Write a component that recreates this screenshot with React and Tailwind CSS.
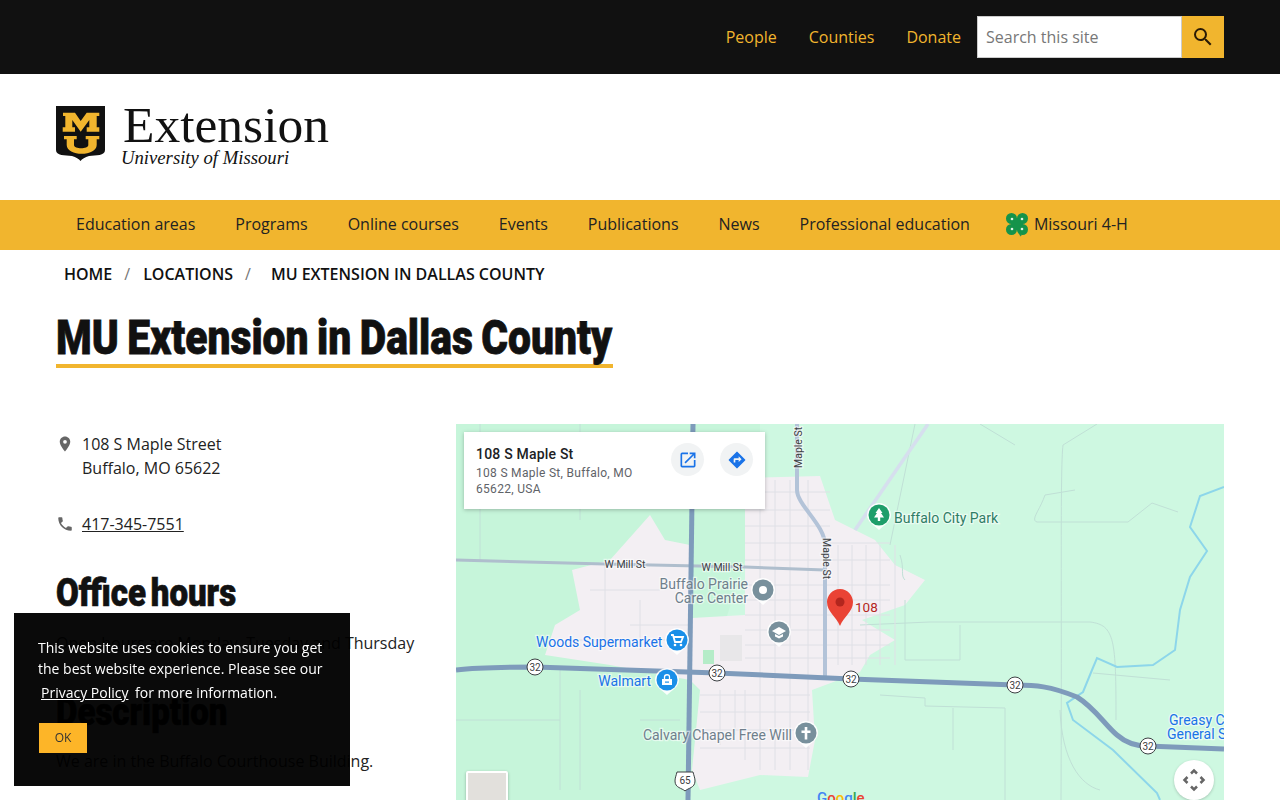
const NAV_ITEMS = ['Education areas', 'Programs', 'Online courses', 'Events', 'Publications', 'News', 'Professional education'];

const Shield = () => (
  <svg width="50" height="56" viewBox="0 0 50 56" className="shrink-0">
    <path d="M0 0H49V44C49 50 40 49 33 50C29 51 26 53 24.500 55C23 53 20 51 16 50C9 49 0 50 0 44Z" fill="#111" />
    <path d="M7 6.700H19L24.700 15L30.700 6.700H43.300V10H40.700V21.300H43.300V25.700H30.700V21.300H33.300V14L24.700 25.700L16.300 14V21.300H19V25.700H6.700V21.300H9.300V10H7Z" fill="#f1b52e" />
    <path d="M8 30H20.700V33.300H18V39C18 43.300 32.300 43.300 32.300 39V33.300H29.700V30H43.300V33.300H40.700V39C40.700 50.700 10.700 50.700 10.700 39V33.300H8Z" fill="#f1b52e" />
  </svg>
);

const Clover = () => (
  <svg width="24" height="25" viewBox="0 0 24 25" className="shrink-0">
    <path d="M12 14C13 18 14 21 16 24" stroke="#2f8f4e" strokeWidth="1.500" fill="none" />
    <g fill="#15934a">
      <circle cx="6.500" cy="6.500" r="5.500" />
      <circle cx="17.500" cy="6.500" r="5.500" />
      <circle cx="6.500" cy="17.500" r="5.500" />
      <circle cx="17.500" cy="17.500" r="5.500" />
      <rect x="6" y="6" width="12" height="12" />
    </g>
    <g fill="#dff3e4">
      <circle cx="7" cy="7" r="1.300" />
      <circle cx="17" cy="7" r="1.300" />
      <circle cx="7" cy="17" r="1.300" />
      <circle cx="17" cy="17" r="1.300" />
    </g>
  </svg>
);

const RouteBadge = ({ x, y }) => (
  <g>
    <circle cx={x} cy={y} r="8" fill="#fff" stroke="#3c4043" strokeWidth="1" />
    <text x={x} y={y + 3.500} textAnchor="middle" fontSize="10" fill="#3c4043">32</text>
  </g>
);

// white-ringed google style place marker, children are drawn around 0,0
const Poi = ({ x, y, fill, children }) => (
  <g transform={`translate(${x} ${y})`}>
    <path d="M-12 0A12 12 0 1 1 12 0C12 7 5 10 0 15C-5 10 -12 7 -12 0Z" fill="#fff" opacity=".9" />
    <circle r="10.500" fill={fill} />
    {children}
  </g>
);

const MapLabel = ({ x, y, fill, anchor = 'start', size = 14, children }) => (
  <text x={x} y={y} fill={fill} fontSize={size} textAnchor={anchor} stroke="#fff" strokeWidth="2.500" strokeOpacity=".55" paintOrder="stroke">
    {children}
  </text>
);

const TownStreets = () => {
  const horizontal = [492, 510, 526, 543, 560, 585, 600, 615, 630, 645, 658, 695, 712, 730, 748];
  const vertical = [760, 775, 790, 808, 838, 852, 866, 880, 895];
  return (
    <g stroke="#dfe0e6" strokeWidth="1" fill="none">
      {horizontal.map((y) => (
        <path key={y} d={`M${y > 680 ? 700 : 745} ${y}H${y > 680 ? 810 : y < 540 ? 830 : 890}`} />
      ))}
      {vertical.map((x) => (
        <path key={x} d={`M${x} ${x > 820 ? 545 : 480}V${x > 820 ? 665 : 770}`} />
      ))}
      <path d="M720 690V745M735 690V735M745 690V760" />
      <path d="M590 590H660M605 565V650M640 600V650M565 640H690M630 625H690" />
    </g>
  );
};

const MapArt = () => (
  <svg width="768" height="376" viewBox="456 424 768 376" className="absolute left-0 top-0" style={{ fontFamily: 'Roboto, sans-serif' }}>
    <rect x="456" y="424" width="768" height="376" fill="#cef8e1" />
    <path d="M456 424H760V480L745 560L700 700L690 800H456Z" fill="#c6f5da" />
    <path d="M745 478L820 476L835 520L875 540L895 565L925 580L905 605L862 620L895 640L870 655L860 672L812 690L815 740L808 777L760 775L700 790L692 770L700 690L690 680L610 665L545 655L555 625L580 610L572 570L610 560L650 515L665 540L690 545L692 618L745 615Z" fill="#f3eff3" />
    <path d="M703 650H714V664H703Z" fill="#b5ecc8" />
    <rect x="720" y="635" width="22" height="26" fill="#e8e7e9" />

    {/* faint country roads */}
    <g stroke="#c0e0d6" strokeWidth="1" fill="none">
      <path d="M915 424L890 545M980 424L1015 445M1063 445L1097 424M1063 445C1060 470 1062 600 1061 800" />
      <path d="M1075 490L1045 495C1040 510 1030 520 1037 522H1128L1152 503L1178 512" />
      <path d="M900 555C905 570 900 575 905 580M905 600V660H960V625M860 625L930 622H1090C1115 625 1116 640 1116 720" />
      <path d="M880 695L925 698V706L1005 708V800M953 708V750M1093 673L1170 680" />
      <path d="M580 424V520M480 424V560M560 670V790M580 690V790M456 720H560M640 720H680" />
      <path d="M1060 710C1062 760 1080 785 1100 790" />
    </g>
    <TownStreets />

    {/* water */}
    <path d="M1224 487L1200 496L1190 527L1207 551L1190 577L1180 610L1175 650L1153 665L1117 667L1097 658L1092 670L1083 692L1067 703L1073 720L1113 750L1157 793L1160 800" stroke="#8dd6ea" strokeWidth="2" fill="none" />

    {/* roads */}
    <path d="M928 424L855 530" stroke="#d6dfee" strokeWidth="3.500" fill="none" />
    <path d="M456 560L605 564L745 567L825 570" stroke="#afbecd" strokeWidth="3" fill="none" />
    <path d="M797 424V490C797 505 825 525 825 545V680" stroke="#b3c3d8" strokeWidth="4" fill="none" />
    <path d="M693 424L688 800" stroke="#7e9bbb" strokeWidth="5" fill="none" />
    <path d="M456 670C480 667 510 667 535 667L717 673L851 679L1015 685C1035 685 1050 686 1077 697C1095 708 1105 725 1117 735C1125 742 1135 746 1147 746L1224 749" stroke="#7e9bbb" strokeWidth="5" fill="none" />

    <MapLabel x="625" y="568" fill="#3c4043" anchor="middle" size="10.500">W Mill St</MapLabel>
    <MapLabel x="722" y="571" fill="#3c4043" anchor="middle" size="10.500">W Mill St</MapLabel>
    <g transform="translate(802 468) rotate(-90)">
      <MapLabel x="0" y="0" fill="#3c4043" size="10.500">Maple St</MapLabel>
    </g>
    <g transform="translate(823 538) rotate(90)">
      <MapLabel x="0" y="0" fill="#3c4043" size="10.500">Maple St</MapLabel>
    </g>

    <MapLabel x="748" y="589" fill="#6f7f8c" anchor="end">Buffalo Prairie</MapLabel>
    <MapLabel x="748" y="603" fill="#6f7f8c" anchor="end">Care Center</MapLabel>
    <Poi x="763" y="590" fill="#78909c"><circle r="4" fill="#fff" /></Poi>

    <Poi x="779" y="632" fill="#78909c">
      <path d="M-7 -1L0 -5L7 -1L0 3Z" fill="#fff" />
      <path d="M-4 2V4.500L0 6.500L4 4.500V2L0 4Z" fill="#fff" />
    </Poi>

    <MapLabel x="536" y="647" fill="#1a73e8">Woods Supermarket</MapLabel>
    <Poi x="677" y="640" fill="#1a8fe8">
      <path d="M-6 -5H-4L-2 2H4L6 -3H-3" stroke="#fff" strokeWidth="1.800" fill="none" />
      <circle cx="-2" cy="5" r="1.300" fill="#fff" />
      <circle cx="4" cy="5" r="1.300" fill="#fff" />
    </Poi>

    <MapLabel x="651" y="686" fill="#1a73e8" anchor="end">Walmart</MapLabel>
    <Poi x="667" y="680" fill="#1a8fe8">
      <path d="M-5 -1H5V5H-5Z" fill="#fff" />
      <path d="M-2.500 -1V-3C-2.500 -6 2.500 -6 2.500 -3V-1" stroke="#fff" strokeWidth="1.300" fill="none" />
      <rect x="-2" y="1.500" width="4" height="1.200" fill="#1a8fe8" />
    </Poi>

    <MapLabel x="792" y="740" fill="#6f7f8c" anchor="end">Calvary Chapel Free Will</MapLabel>
    <Poi x="806" y="733" fill="#78909c">
      <path d="M-1.300 -6H1.300V-2.500H4.500V0H1.300V6.500H-1.300V0H-4.500V-2.500H-1.300Z" fill="#fff" />
    </Poi>

    <Poi x="879" y="515" fill="#1e9e6a">
      <path d="M0 -7L3.500 -2H2L5 2.500H1.200V6H-1.200V2.500H-5L-2 -2H-3.500Z" fill="#fff" />
    </Poi>
    <MapLabel x="894" y="523" fill="#2f7d66">Buffalo City Park</MapLabel>

    <MapLabel x="1169" y="725" fill="#1a73e8">Greasy Creek</MapLabel>
    <MapLabel x="1167" y="739" fill="#1a73e8">General Store</MapLabel>

    <RouteBadge x={535} y={667} />
    <RouteBadge x={717} y={673} />
    <RouteBadge x={851} y={679} />
    <RouteBadge x={1015} y={685} />
    <RouteBadge x={1148} y={746} />

    <g>
      <path d="M677 772H693C694 776 695 778 695 781C695 788 688 788 685 791C682 788 675 788 675 781C675 778 676 776 677 772Z" fill="#fff" stroke="#3c4043" />
      <text x="685" y="784" textAnchor="middle" fontSize="10" fill="#3c4043">65</text>
    </g>

    {/* red pin */}
    <path d="M840 589C832 589 827 596 827 602C827 612 836 616 840 626C844 616 853 612 853 602C853 596 848 589 840 589Z" fill="#ea4335" />
    <circle cx="840" cy="602" r="4.500" fill="#b3261e" />
    <text x="855" y="612" fontSize="13.500" fill="#b3261e">108</text>

    <text x="817" y="803" fontSize="15" fontWeight="500">
      <tspan fill="#4285f4">G</tspan><tspan fill="#ea4335">o</tspan><tspan fill="#fbbc04">o</tspan><tspan fill="#4285f4">g</tspan><tspan fill="#34a853">l</tspan><tspan fill="#ea4335">e</tspan>
    </text>
  </svg>
);

const MapPanel = () => (
  <div className="relative h-[376px] overflow-hidden">
    <MapArt />
    <div className="absolute left-2 top-2 w-[301px] h-[77px] bg-white shadow-[0_1px_4px_rgba(0,0,0,0.25)] pl-3 pt-3 flex font-['Roboto',sans-serif]">
      <div className="w-[195px]">
        <div className="text-[14px] leading-[20px] font-medium tracking-[.2px] text-[#202124]">108 S Maple St</div>
        <div className="w-[175px] text-[12px] leading-[16px] tracking-[.3px] text-[#5f6368] mt-[1px]">108 S Maple St, Buffalo, MO 65622, USA</div>
      </div>
      <div className="flex gap-[16px] -mt-[1px]">
        <div className="w-[33px] h-[33px] rounded-full bg-[#f1f3f4] flex items-center justify-center">
          <svg width="20" height="20" viewBox="0 0 24 24" fill="#1a73e8">
            <path d="M19 19H5V5h7V3H5a2 2 0 0 0-2 2v14a2 2 0 0 0 2 2h14a2 2 0 0 0 2-2v-7h-2v7zM14 3v2h3.590l-9.830 9.830 1.410 1.410L19 6.410V10h2V3h-7z" />
          </svg>
        </div>
        <div className="w-[33px] h-[33px] rounded-full bg-[#f1f3f4] flex items-center justify-center">
          <svg width="20" height="20" viewBox="0 0 24 24" fill="#1a73e8">
            <path d="M21.710 11.290l-9-9a1 1 0 0 0-1.420 0l-9 9a1 1 0 0 0 0 1.420l9 9a1 1 0 0 0 1.420 0l9-9a1 1 0 0 0 0-1.420zM14 14.500V12h-4v3H8v-4a1 1 0 0 1 1-1h5V7.500l3.500 3.500-3.500 3.500z" />
          </svg>
        </div>
      </div>
    </div>
    <div className="absolute left-[10px] top-[347px] w-[42px] h-[42px] bg-[#e2e0dc] border-2 border-white rounded-[2px] shadow-[0_1px_3px_rgba(0,0,0,0.3)]" />
    <div className="absolute left-[718px] top-[336px] w-[40px] h-[40px] rounded-full bg-white shadow-[0_1px_3px_rgba(0,0,0,0.2)] flex items-center justify-center">
      <svg width="24" height="24" viewBox="0 0 24 24" fill="none" stroke="#666" strokeWidth="2.500">
        <path d="M9 5.500L12 2.500L15 5.500M9 18.500L12 21.500L15 18.500M5.500 9L2.500 12L5.500 15M18.500 9L21.500 12L18.500 15" />
      </svg>
    </div>
  </div>
);

const CookieNotice = () => (
  <div className="fixed left-[14px] bottom-[14px] w-[336px] h-[173px] bg-black/[.96] text-white px-[24px] pt-[24px] text-[14px]">
    <p className="leading-[21px]">
      This website uses cookies to ensure you get the best website experience. Please see our
      <a href="#" className="inline-block underline mx-[3px] mt-[3px]">Privacy Policy</a> for more information.
    </p>
    <button className="block mt-[20px] ml-[1px] w-[48px] h-[30px] bg-[#fdb528] text-[#333] text-[12px]">OK</button>
  </div>
);

const SubHeading = ({ className, children }) => (
  <h2 className={`h-[44px] text-[#111] ${className}`}>
    <span className="inline-block origin-left scale-x-[.87] whitespace-nowrap font-['Roboto',sans-serif] font-black text-[38px] leading-[44px] [word-spacing:-4px] [-webkit-text-stroke:0.7px_#111]">
      {children}
    </span>
  </h2>
);

export default function App() {
  return (
    <div className="h-[800px] overflow-hidden bg-white text-[#222] font-['Open_Sans',sans-serif] text-[16px] leading-[24px]">
      <div className="h-[74px] bg-[#111] flex items-center justify-end pr-[56px]">
        <a href="#" className="text-[#f1b52e] mr-[32px]">People</a>
        <a href="#" className="text-[#f1b52e] mr-[32px]">Counties</a>
        <a href="#" className="text-[#f1b52e] mr-[16px]">Donate</a>
        <div className="flex h-[42px]">
          <div className="w-[205px] bg-white border border-[#ccc] pl-[8px] flex items-center text-[#777]">Search this site</div>
          <button className="w-[42px] bg-[#f1b52e] flex items-center justify-center">
            <svg width="24" height="24" viewBox="0 0 24 24" fill="#2a1a05">
              <path d="M15.500 14h-.790l-.280-.270A6.471 6.471 0 0 0 16 9.500 6.500 6.500 0 1 0 9.500 16c1.610 0 3.090-.590 4.230-1.570l.270.280v.790l5 4.990L20.490 19l-4.990-5zm-6 0C7.010 14 5 11.990 5 9.500S7.010 5 9.500 5 14 7.010 14 9.500 11.990 14 9.500 14z" />
            </svg>
          </button>
        </div>
      </div>

      <div className="h-[126px] pl-[56px] pt-[32px] flex">
        <Shield />
        <div className="ml-[17px] -mt-[7px] font-['Liberation_Serif',serif] text-[#111]">
          <div className="text-[51.500px] leading-[52px]">Extension</div>
          <div className="text-[18.700px] leading-[22px] italic -mt-[4px] -ml-[2px]">University of Missouri</div>
        </div>
      </div>

      <nav className="h-[50px] bg-[#f1b52e] pl-[56px] pb-[2px] flex items-center text-[#222]">
        {NAV_ITEMS.map((item) => (
          <a key={item} href="#" className="px-[20px]">{item}</a>
        ))}
        <a href="#" className="pl-[15px] flex items-center gap-[5px]">
          <Clover />
          Missouri 4-H
        </a>
      </nav>

      <div className="pl-[64px] pt-[12px] flex uppercase font-semibold text-[#111]">
        <a href="#">Home</a>
        <span className="ml-[12px] mr-[13px] font-normal text-[#777]">/</span>
        <a href="#">Locations</a>
        <span className="ml-[12px] mr-[20px] font-normal text-[#777]">/</span>
        <span>MU Extension in Dallas County</span>
      </div>

      <div className="pl-[56px] mt-[16px]">
        <h1 className="w-[557px] h-[66px] border-b-[4px] border-[#f1b52e] text-[#111]">
          <span className="inline-block origin-left scale-x-[.85] whitespace-nowrap font-['Roboto',sans-serif] font-black text-[48px] leading-[72px] [word-spacing:-2px] [-webkit-text-stroke:0.8px_#111]">
            MU Extension in Dallas County
          </span>
        </h1>
      </div>

      <div className="flex pl-[56px] pr-[56px] mt-[56px]">
        <div className="w-[400px] shrink-0 pt-[8px]">
          <div className="flex">
            <svg width="18" height="18" viewBox="0 0 24 24" fill="#666" className="mt-[3px] shrink-0">
              <path d="M12 2C8.130 2 5 5.130 5 9c0 5.250 7 13 7 13s7-7.750 7-13c0-3.870-3.130-7-7-7zm0 9.500a2.500 2.500 0 0 1 0-5 2.500 2.500 0 0 1 0 5z" />
            </svg>
            <div className="ml-[8px]">108 S Maple Street<br />Buffalo, MO 65622</div>
          </div>
          <div className="flex mt-[32px]">
            <svg width="18" height="18" viewBox="0 0 24 24" fill="#666" className="mt-[3px] shrink-0">
              <path d="M6.620 10.790c1.440 2.830 3.760 5.140 6.590 6.590l2.200-2.200c.270-.270.670-.360 1.020-.240 1.120.370 2.330.570 3.570.570.550 0 1 .450 1 1V20c0 .550-.450 1-1 1-9.390 0-17-7.610-17-17 0-.550.450-1 1-1h3.500c.550 0 1 .450 1 1 0 1.250.200 2.450.570 3.570.110.350.030.740-.250 1.020l-2.200 2.200z" />
            </svg>
            <a href="#" className="ml-[8px] underline">417-345-7551</a>
          </div>
          <SubHeading className="mt-[35px]">Office hours</SubHeading>
          <p className="mt-[16px] whitespace-nowrap">Open hours are Monday, Tuesday and Thursday</p>
          <SubHeading className="mt-[35px]">Description</SubHeading>
          <p className="mt-[15px]">We are in the Buffalo Courthouse Building.</p>
        </div>
        <div className="flex-1">
          <MapPanel />
        </div>
      </div>

      <CookieNotice />
    </div>
  );
}
